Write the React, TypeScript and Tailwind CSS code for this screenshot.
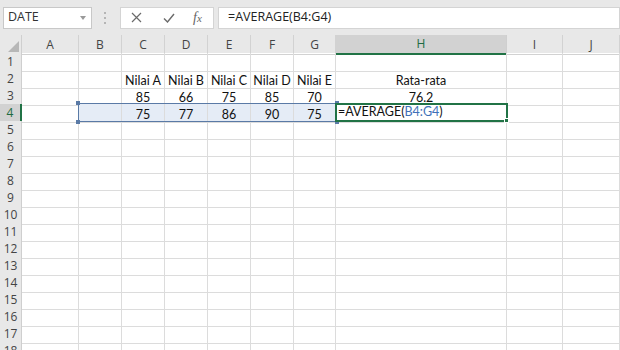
const COLS = ["A", "B", "C", "D", "E", "F", "G", "H", "I", "J"];
const GRID =
  "grid grid-cols-[22px_57px_43px_43px_43px_43px_43px_42px_171px_56px_1fr]";

const DATA: Record<number, Record<string, string>> = {
  2: { C: "Nilai A", D: "Nilai B", E: "Nilai C", F: "Nilai D", G: "Nilai E", H: "Rata-rata" },
  3: { C: "85", D: "66", E: "75", F: "85", G: "70", H: "76.2" },
  4: { C: "75", D: "77", E: "86", F: "90", G: "75" },
};

const SELECTED = ["B", "C", "D", "E", "F", "G"];

export default function App() {
  const rows = Array.from({ length: 18 }, (_, i) => i + 1);

  return (
    <div className="relative h-[350px] w-[620px] overflow-hidden bg-white font-['Lato',sans-serif]">
      {/* formula bar */}
      <div className="flex h-[35px] items-center bg-[#e8e8e8] font-['Open_Sans',sans-serif]">
        <div className="ml-[3px] flex h-[22px] w-[89px] items-center justify-between border border-[#c8c8c8] bg-white pl-[4px] pr-[5px] text-[12.5px] text-[#333]">
          <span>DATE</span>
          <svg width="6" height="4" viewBox="0 0 6 4">
            <path d="M0 0h6L3 4z" fill="#9a9a9a" />
          </svg>
        </div>
        <div className="ml-[12px] flex flex-col gap-[3px]">
          <span className="h-[2px] w-[2px] bg-[#b5b5b5]" />
          <span className="h-[2px] w-[2px] bg-[#b5b5b5]" />
          <span className="h-[2px] w-[2px] bg-[#b5b5b5]" />
        </div>
        <div className="ml-[14px] flex h-[22px] w-[94px] items-center border border-[#d4d4d4] bg-white">
          <svg className="ml-[10px]" width="11" height="11" viewBox="0 0 11 11">
            <path d="M1 1l9 9M10 1l-9 9" stroke="#6a6a6a" strokeWidth="1.2" fill="none" />
          </svg>
          <svg className="ml-[21px]" width="12" height="10" viewBox="0 0 12 10">
            <path d="M1 5.5l3.5 3.5L11 1" stroke="#6a6a6a" strokeWidth="1.4" fill="none" />
          </svg>
          <span className="ml-[18px] font-['Liberation_Serif',serif] text-[14px] italic leading-none text-[#666]">
            f<span className="text-[11px]">x</span>
          </span>
        </div>
        <div className="ml-[4px] flex h-[22px] flex-1 items-center border border-[#d4d4d4] bg-white pl-[9px] text-[12.5px] text-[#222]">
          =AVERAGE(B4:G4)
        </div>
      </div>

      {/* column headers */}
      <div className={`${GRID} h-[18px] bg-[#e8e8e8] font-['Open_Sans',sans-serif] text-[12px] text-[#444]`}>
        <div className="relative border-r border-b border-[#cfcfcf]">
          <svg className="absolute right-[2px] bottom-[2px]" width="11" height="11" viewBox="0 0 11 11">
            <path d="M11 0v11H0z" fill="#b7b7b7" />
          </svg>
        </div>
        {COLS.map((c) =>
          c === "H" ? (
            <div
              key={c}
              className="flex items-center justify-center border-r border-b-2 border-r-[#cfcfcf] border-b-[#217346] bg-[#d2d2d2] text-[#1e6b41]"
            >
              {c}
            </div>
          ) : (
            <div key={c} className="flex items-center justify-center border-r border-b border-[#d2d2d2]">
              {c}
            </div>
          ),
        )}
      </div>

      {/* sheet */}
      <div className="relative">
        {rows.map((r) => (
          <div key={r} className={`${GRID} h-[17px] text-[12.5px] text-[#111]`}>
            <div
              className={`flex items-center justify-center border-b font-['Open_Sans',sans-serif] text-[12px] ${
                r === 4
                  ? "border-r-2 border-r-[#217346] border-b-[#cfcfcf] bg-[#d2d2d2] text-[#1e6b41]"
                  : "border-r border-[#cfcfcf] bg-[#e8e8e8] text-[#444]"
              }`}
            >
              {r}
            </div>
            {COLS.map((c) => (
              <div
                key={c}
                className={`flex items-end justify-center overflow-visible whitespace-nowrap border-r border-b border-[#dcdcdc] pb-[1px] leading-none ${
                  r === 4 && SELECTED.includes(c) ? "bg-[#e5ecf6]" : ""
                }`}
              >
                {DATA[r]?.[c] ?? ""}
              </div>
            ))}
          </div>
        ))}

        {/* referenced range B4:G4 */}
        <div className="absolute top-[50px] left-[78px] h-[19px] w-[259px] border border-[#5a7aa6]">
          <span className="absolute -top-[3px] -left-[3px] h-[4px] w-[4px] bg-[#5a7aa6]" />
          <span className="absolute -top-[3px] -right-[3px] h-[4px] w-[4px] bg-[#5a7aa6]" />
          <span className="absolute -bottom-[3px] -left-[3px] h-[4px] w-[4px] bg-[#5a7aa6]" />
          <span className="absolute -right-[3px] -bottom-[3px] h-[4px] w-[4px] bg-[#5a7aa6]" />
        </div>

        {/* active cell H4 */}
        <div className="absolute top-[50px] left-[335px] flex h-[19px] w-[173px] items-center border-2 border-[#217346] bg-white pl-[1px] text-[12.5px] text-[#111]">
          <span>
            =AVERAGE(<span className="text-[#3f70b8]">B4:G4</span>)
          </span>
          <span className="absolute -right-[3px] -bottom-[3px] h-[5px] w-[5px] border border-white bg-[#217346]" />
        </div>
      </div>
    </div>
  );
}
